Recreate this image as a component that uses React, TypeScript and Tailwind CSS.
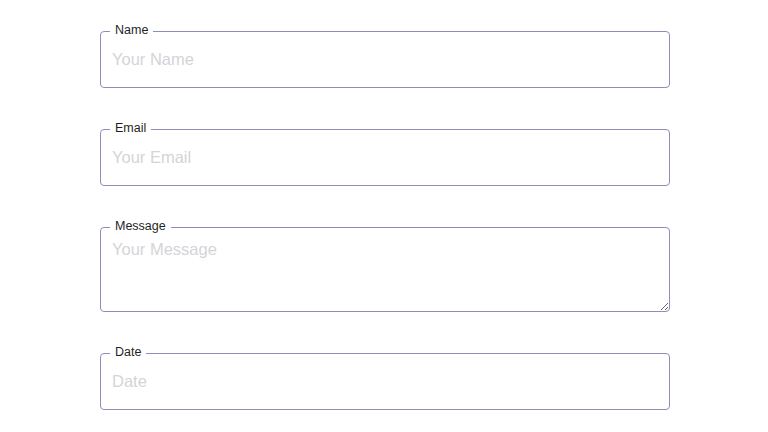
import React from 'react';

const fieldClass =
  'w-full h-10 px-[11px] py-2 bg-transparent text-[16.5px] leading-6 text-gray-800 outline-none placeholder:text-[#d4d4d8]';

const legendClass = 'ml-[9px] px-[5px] text-[12.5px] leading-4 text-[#1f1f1f] -translate-y-[1px]';

const Field: React.FC<{ label: string; children: React.ReactNode }> = ({ label, children }) => (
  <fieldset className="rounded border border-[#8f8cc0] pb-2">
    <legend className={legendClass}>{label}</legend>
    {children}
  </fieldset>
);

const App: React.FC = () => {
  return (
    <div
      className="min-h-screen bg-white pt-[23px]"
      style={{ fontFamily: '"Liberation Sans", Arial, sans-serif' }}
    >
      <form className="ml-[100px] flex w-[570px] flex-col gap-[33px]">
        <Field label="Name">
          <input type="text" placeholder="Your Name" className={fieldClass} />
        </Field>
        <Field label="Email">
          <input type="email" placeholder="Your Email" className={fieldClass} />
        </Field>
        <fieldset className="rounded border border-[#8f8cc0]">
          <legend className={legendClass}>Message</legend>
          <textarea
            placeholder="Your Message"
            className="block h-[76px] w-full resize-y bg-transparent px-[11px] pt-[2px] text-[16.5px] leading-6 text-gray-800 outline-none placeholder:text-[#d4d4d8]"
          />
        </fieldset>
        <Field label="Date">
          <input type="text" placeholder="Date" className={fieldClass} />
        </Field>
      </form>
    </div>
  );
};

export default App;
